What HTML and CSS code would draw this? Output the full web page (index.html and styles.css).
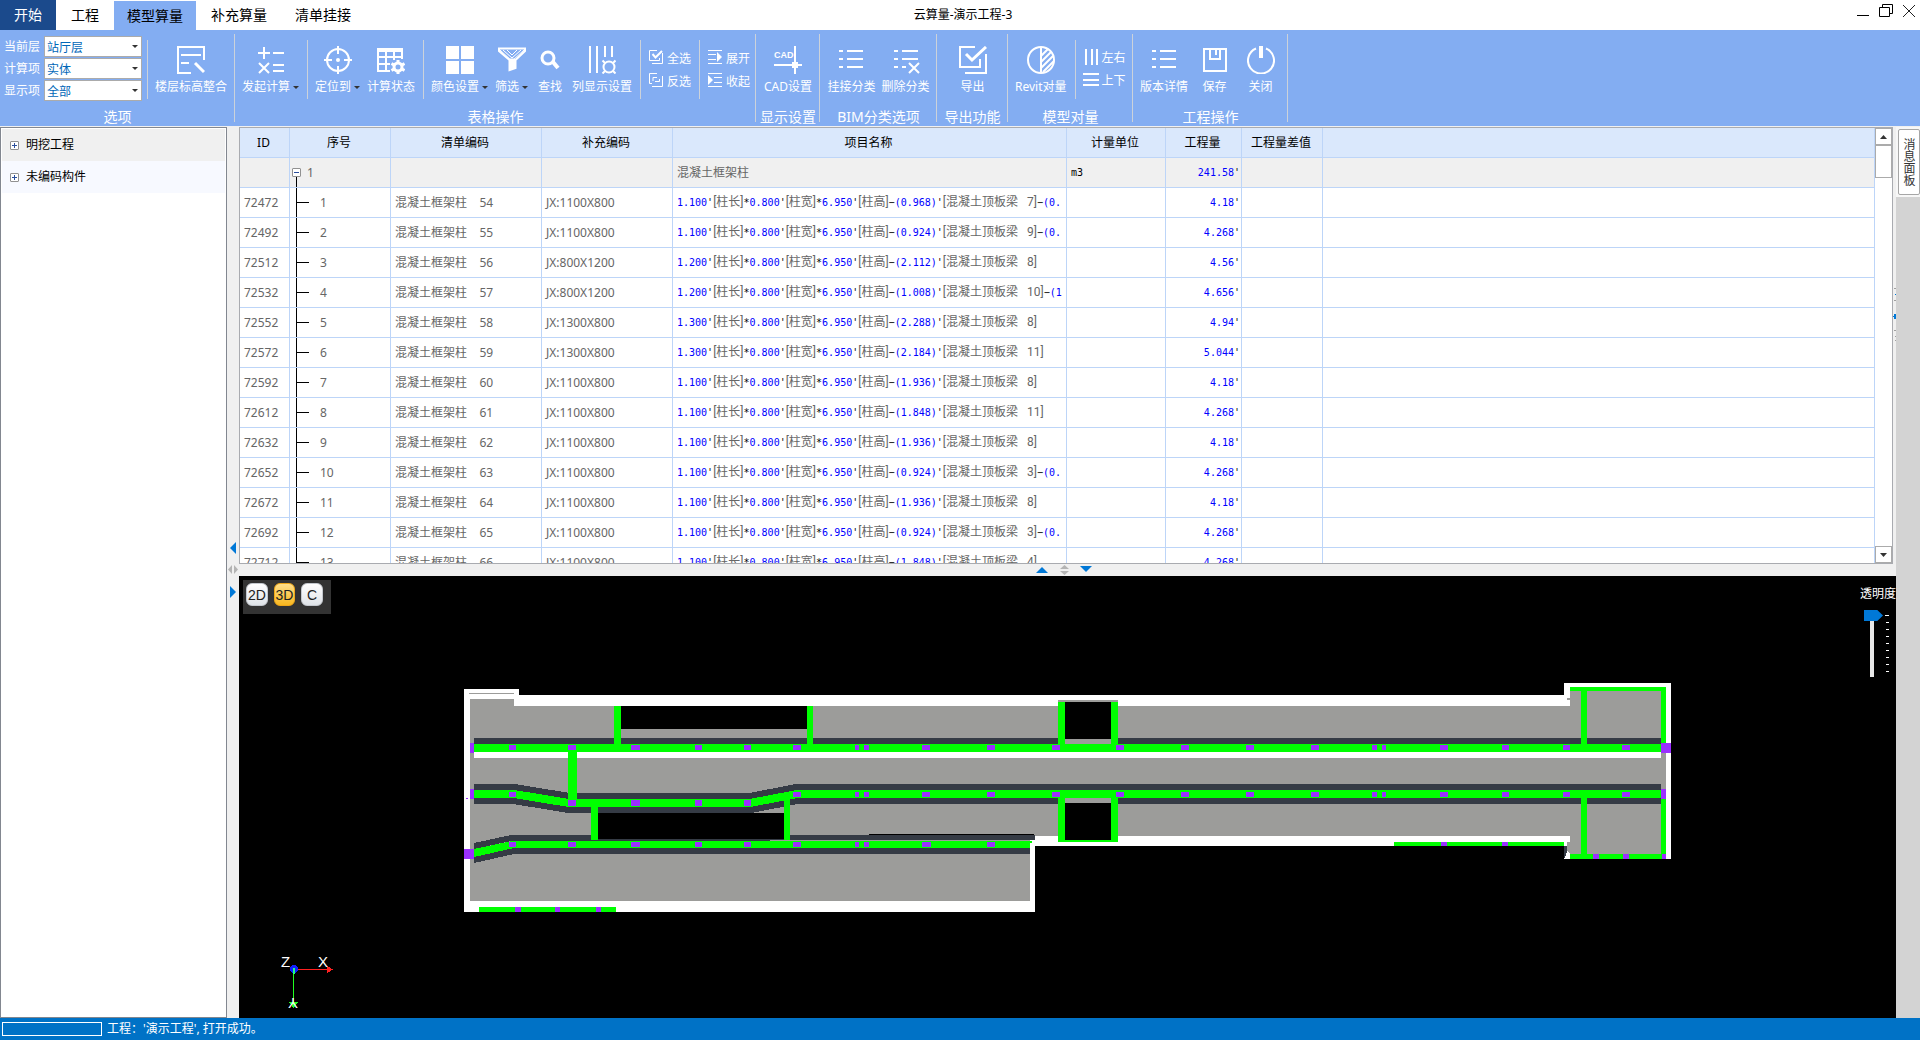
FILE: index.html
```html
<!DOCTYPE html>
<html lang="zh-CN">
<head>
<meta charset="utf-8">
<title>云算量-演示工程-3</title>
<link rel="stylesheet" href="styles.css">
</head>
<body>
<div class="app">
  <header class="titlebar">
    <nav class="tabs">
      <button class="tab tab-start">开始</button>
      <button class="tab">工程</button>
      <button class="tab tab-active">模型算量</button>
      <button class="tab">补充算量</button>
      <button class="tab">清单挂接</button>
    </nav>
    <h1 class="title">云算量-演示工程-3</h1>
    <div class="window-buttons">
      <button aria-label="最小化"><svg width="14" height="14"><path d="M1 11.500H13" stroke="#000"/></svg></button>
      <button aria-label="还原"><svg width="14" height="14" fill="none" stroke="#000"><path d="M.5 3.500H10.500V12.500H.5ZM3.500 3.500V.5H13.500V9.500H10.500"/></svg></button>
      <button aria-label="关闭窗口"><svg width="14" height="14"><path d="M1 1L13 13M13 1L1 13" stroke="#222"/></svg></button>
    </div>
  </header>

  <div class="ribbon">
    <section class="group group-options">
      <div class="tools">
        <div class="fields">
          <label for="floor">当前层</label><span class="combo"><select id="floor"><option>站厅层</option></select></span>
          <label for="calc">计算项</label><span class="combo"><select id="calc"><option>实体</option></select></span>
          <label for="show">显示项</label><span class="combo"><select id="show"><option>全部</option></select></span>
        </div>
        <i class="sep"></i>
        <button class="tool"><svg class="icon" viewBox="0 0 28 28" fill="none" stroke="#fff" stroke-width="2"><path d="M14 27H1V1H27V14M4 9H24M4 17H12"/><path d="M18 17L27 26" stroke-width="3"/></svg><span>楼层标高整合</span></button>
      </div>
      <h2>选项</h2>
    </section>

    <section class="group group-table">
      <div class="tools">
        <button class="tool"><svg class="icon" viewBox="0 0 28 28" fill="none" stroke="#fff" stroke-width="2"><path d="M1 7H13M7 1V13M16 7H27M16 19H27M16 25H27M2 17L12 27M12 17L2 27"/></svg><span class="drop">发起计算</span></button>
        <i class="sep"></i>
        <button class="tool"><svg class="icon" viewBox="0 0 28 28" fill="none" stroke="#fff" stroke-width="2"><circle cx="14" cy="14" r="11"/><path d="M14 0V8M14 20V28M0 14H8M20 14H28"/><circle cx="14" cy="14" r="2" fill="#fff" stroke="none"/></svg><span class="drop">定位到</span></button>
        <button class="tool"><svg class="icon" viewBox="0 0 28 28" fill="none" stroke="#fff" stroke-width="2"><path d="M0 4H26M1 2V25H13M1 11H26M1 18H13M9 4V25M17 6V14M25 3V13" /><path d="M0 4H26" stroke-width="4"/><circle cx="21" cy="21" r="4" stroke-width="3"/><path d="M21 14V17M21 25V28M14.500 17.500L17 19M25 23L27.500 24.500M14.500 24.500L17 23M25 19L27.500 17.500" stroke-width="3"/></svg><span>计算状态</span></button>
        <i class="sep"></i>
        <button class="tool"><svg class="icon" viewBox="0 0 28 28" fill="#fff"><path d="M0 0H13V13H0ZM15 0H28V13H15ZM0 15H13V28H0ZM15 15H28V28H15Z"/></svg><span class="drop">颜色设置</span></button>
        <button class="tool"><svg class="icon" viewBox="0 0 28 28" fill="none" stroke="#fff"><path d="M1 2.500H27V5L17.500 14V22L11.500 24V14L1 5Z" stroke-width="2"/><path d="M2 4L14 15L26 4M5 4L14 12L23 4M9 4L14 9L19 4M13 13V23M15 13V22"/><path d="M12 13H17V22L12 23Z" fill="#fff"/></svg><span class="drop">筛选</span></button>
        <button class="tool tool-min"><svg class="icon" viewBox="0 0 28 28" fill="none" stroke="#fff"><circle cx="12" cy="12" r="6" stroke-width="3"/><path d="M17 16L22 22" stroke-width="4"/></svg><span>查找</span></button>
        <button class="tool"><svg class="icon" viewBox="0 0 28 28" fill="none" stroke="#fff" stroke-width="2"><path d="M2 0V27M9 0V27M17 0V11M24 0V11"/><circle cx="21" cy="21" r="5.500"/><path d="M14.500 14.500L17 17M27.500 14.500L25 17M14.500 27.500L17 25M27.500 27.500L25 25"/></svg><span>列显示设置</span></button>
        <i class="sep"></i>
        <div class="stack">
          <button><svg width="14" height="14" fill="none" stroke="#fff"><path d="M8 .5H.5V10.500H10.500V8M13.500 3V13.500H3"/><path d="M3.500 4L6.500 7.500L13 1" stroke-width="2"/></svg><span>全选</span></button>
          <button><svg width="14" height="14" fill="none" stroke="#fff"><path d="M8 .5H.5V10.500H3M6 8.500H10.500V6M13.500 3V13.500H3M4 8V4.500H8"/></svg><span>反选</span></button>
        </div>
        <i class="sep"></i>
        <div class="stack">
          <button><svg width="14" height="14" stroke="#fff"><path d="M0 .5H14M0 4.500H8M0 9.500H8M0 13.500H14"/><path d="M9 2V12L14 7Z" fill="#fff" stroke="none"/></svg><span>展开</span></button>
          <button><svg width="14" height="14" stroke="#fff"><path d="M0 .5H14M6 4.500H14M6 9.500H14M0 13.500H14"/><path d="M0 2V12L5 7Z" fill="#fff" stroke="none"/></svg><span>收起</span></button>
        </div>
      </div>
      <h2>表格操作</h2>
    </section>

    <section class="group group-cad">
      <div class="tools tools-center">
        <button class="tool"><svg class="icon" viewBox="0 0 28 28"><path d="M21 0V28M0 19H28" stroke="#fff" stroke-width="2"/><path d="M18 16H24V22H18Z" fill="#fff"/><text x="0" y="12" class="cad-text">CAD</text></svg><span>CAD设置</span></button>
      </div>
      <h2>显示设置</h2>
    </section>

    <section class="group group-bim">
      <div class="tools tools-center">
        <button class="tool"><svg class="icon" viewBox="0 0 28 28" stroke="#fff" stroke-width="2"><path d="M2 5H6M10 5H26M2 13H6M10 13H26M2 21H6M10 21H26"/></svg><span>挂接分类</span></button>
        <button class="tool"><svg class="icon" viewBox="0 0 28 28" stroke="#fff" stroke-width="2"><path d="M2 5H6M10 5H26M2 13H6M10 13H26M2 21H6M10 21H14M17 17L27 27M27 17L17 27"/></svg><span>删除分类</span></button>
      </div>
      <h2>BIM分类选项</h2>
    </section>

    <section class="group group-export">
      <div class="tools tools-center">
        <button class="tool"><svg class="icon" viewBox="0 0 28 28" fill="none" stroke="#fff" stroke-width="2"><path d="M16 1H1V21H21V13M27 8V27H6"/><path d="M7 8L13 14L27 1" stroke-width="3"/></svg><span>导出</span></button>
      </div>
      <h2>导出功能</h2>
    </section>

    <section class="group group-model">
      <div class="tools">
        <button class="tool"><svg class="icon" viewBox="0 0 28 28" fill="none" stroke="#fff" stroke-width="2"><circle cx="14" cy="14" r="13"/><path d="M14 1V27M14 10L21 3M14 16L24 6M14 22L26 10M16 26L27 15"/></svg><span>Revit对量</span></button>
        <i class="sep"></i>
        <div class="stack">
          <button><svg width="16" height="16" stroke="#fff" stroke-width="2"><path d="M3 0V16M9 0V16M14 0V16"/></svg><span>左右</span></button>
          <button><svg width="16" height="16" stroke="#fff" stroke-width="2"><path d="M0 2H16M0 8H16M0 13H16"/></svg><span>上下</span></button>
        </div>
      </div>
      <h2>模型对量</h2>
    </section>

    <section class="group group-project">
      <div class="tools">
        <button class="tool"><svg class="icon" viewBox="0 0 28 28" stroke="#fff" stroke-width="2"><path d="M2 5H6M10 5H26M2 13H6M10 13H26M2 21H6M10 21H26"/></svg><span>版本详情</span></button>
        <button class="tool tool-wide"><svg class="icon" viewBox="0 0 28 28" fill="none" stroke="#fff" stroke-width="2"><path d="M3 3H25V25H3ZM9 3V13H19V3M15 3V9"/></svg><span>保存</span></button>
        <button class="tool tool-wide"><svg class="icon" viewBox="0 0 28 28" fill="none" stroke="#fff" stroke-width="2"><path d="M9 2.500A13 13 0 1 0 19 2.500"/><path d="M14 0V12" stroke-width="4"/></svg><span>关闭</span></button>
      </div>
      <h2>工程操作</h2>
    </section>
  </div>

  <main class="workspace">
    <aside class="tree">
      <button class="node node-first"><i class="expander"></i>明挖工程</button>
      <button class="node node-second"><i class="expander"></i>未编码构件</button>
    </aside>

    <div class="vsplit">
      <svg width="12" height="60"><path d="M9 2V14L3 8Z" fill="#0078d7"/><path d="M5 25V34L1 29.500ZM7 25V34L11 29.500Z" fill="#b4b4b4"/><path d="M3 46V58L9 52Z" fill="#0078d7"/></svg>
    </div>

    <div class="center">
      <div class="grid">
        <div class="grid-scroll">
          <table>
            <colgroup><col class="c-id"><col class="c-seq"><col class="c-list"><col class="c-extra"><col class="c-name"><col class="c-unit"><col class="c-qty"><col class="c-diff"><col></colgroup>
            <thead><tr><th>ID</th><th>序号</th><th>清单编码</th><th>补充编码</th><th>项目名称</th><th>计量单位</th><th>工程量</th><th>工程量差值</th><th></th></tr></thead>
            <tbody>
              <tr class="total"><td></td><td class="root"><i class="expander open"></i>1</td><td></td><td></td><td>混凝土框架柱</td><td class="unit">m3</td><td class="qty">241.58<b>'</b></td><td></td><td></td></tr>
              <tr><td>72472</td><td class="leaf">1</td><td>混凝土框架柱    54</td><td>JX:1100X800</td><td class="f">1.100<b>'</b><s>[柱长]</s><b>*</b>0.800<b>'</b><s>[柱宽]</s><b>*</b>6.950<b>'</b><s>[柱高]</s><b>−</b>(0.968)<b>'</b><s>[混凝土顶板梁   7]</s><b>−</b>(0.</td><td></td><td class="qty">4.18<b>'</b></td><td></td><td></td></tr>
              <tr><td>72492</td><td class="leaf">2</td><td>混凝土框架柱    55</td><td>JX:1100X800</td><td class="f">1.100<b>'</b><s>[柱长]</s><b>*</b>0.800<b>'</b><s>[柱宽]</s><b>*</b>6.950<b>'</b><s>[柱高]</s><b>−</b>(0.924)<b>'</b><s>[混凝土顶板梁   9]</s><b>−</b>(0.</td><td></td><td class="qty">4.268<b>'</b></td><td></td><td></td></tr>
              <tr><td>72512</td><td class="leaf">3</td><td>混凝土框架柱    56</td><td>JX:800X1200</td><td class="f">1.200<b>'</b><s>[柱长]</s><b>*</b>0.800<b>'</b><s>[柱宽]</s><b>*</b>6.950<b>'</b><s>[柱高]</s><b>−</b>(2.112)<b>'</b><s>[混凝土顶板梁   8]</s></td><td></td><td class="qty">4.56<b>'</b></td><td></td><td></td></tr>
              <tr><td>72532</td><td class="leaf">4</td><td>混凝土框架柱    57</td><td>JX:800X1200</td><td class="f">1.200<b>'</b><s>[柱长]</s><b>*</b>0.800<b>'</b><s>[柱宽]</s><b>*</b>6.950<b>'</b><s>[柱高]</s><b>−</b>(1.008)<b>'</b><s>[混凝土顶板梁   10]</s><b>−</b>(1</td><td></td><td class="qty">4.656<b>'</b></td><td></td><td></td></tr>
              <tr><td>72552</td><td class="leaf">5</td><td>混凝土框架柱    58</td><td>JX:1300X800</td><td class="f">1.300<b>'</b><s>[柱长]</s><b>*</b>0.800<b>'</b><s>[柱宽]</s><b>*</b>6.950<b>'</b><s>[柱高]</s><b>−</b>(2.288)<b>'</b><s>[混凝土顶板梁   8]</s></td><td></td><td class="qty">4.94<b>'</b></td><td></td><td></td></tr>
              <tr><td>72572</td><td class="leaf">6</td><td>混凝土框架柱    59</td><td>JX:1300X800</td><td class="f">1.300<b>'</b><s>[柱长]</s><b>*</b>0.800<b>'</b><s>[柱宽]</s><b>*</b>6.950<b>'</b><s>[柱高]</s><b>−</b>(2.184)<b>'</b><s>[混凝土顶板梁   11]</s></td><td></td><td class="qty">5.044<b>'</b></td><td></td><td></td></tr>
              <tr><td>72592</td><td class="leaf">7</td><td>混凝土框架柱    60</td><td>JX:1100X800</td><td class="f">1.100<b>'</b><s>[柱长]</s><b>*</b>0.800<b>'</b><s>[柱宽]</s><b>*</b>6.950<b>'</b><s>[柱高]</s><b>−</b>(1.936)<b>'</b><s>[混凝土顶板梁   8]</s></td><td></td><td class="qty">4.18<b>'</b></td><td></td><td></td></tr>
              <tr><td>72612</td><td class="leaf">8</td><td>混凝土框架柱    61</td><td>JX:1100X800</td><td class="f">1.100<b>'</b><s>[柱长]</s><b>*</b>0.800<b>'</b><s>[柱宽]</s><b>*</b>6.950<b>'</b><s>[柱高]</s><b>−</b>(1.848)<b>'</b><s>[混凝土顶板梁   11]</s></td><td></td><td class="qty">4.268<b>'</b></td><td></td><td></td></tr>
              <tr><td>72632</td><td class="leaf">9</td><td>混凝土框架柱    62</td><td>JX:1100X800</td><td class="f">1.100<b>'</b><s>[柱长]</s><b>*</b>0.800<b>'</b><s>[柱宽]</s><b>*</b>6.950<b>'</b><s>[柱高]</s><b>−</b>(1.936)<b>'</b><s>[混凝土顶板梁   8]</s></td><td></td><td class="qty">4.18<b>'</b></td><td></td><td></td></tr>
              <tr><td>72652</td><td class="leaf">10</td><td>混凝土框架柱    63</td><td>JX:1100X800</td><td class="f">1.100<b>'</b><s>[柱长]</s><b>*</b>0.800<b>'</b><s>[柱宽]</s><b>*</b>6.950<b>'</b><s>[柱高]</s><b>−</b>(0.924)<b>'</b><s>[混凝土顶板梁   3]</s><b>−</b>(0.</td><td></td><td class="qty">4.268<b>'</b></td><td></td><td></td></tr>
              <tr><td>72672</td><td class="leaf">11</td><td>混凝土框架柱    64</td><td>JX:1100X800</td><td class="f">1.100<b>'</b><s>[柱长]</s><b>*</b>0.800<b>'</b><s>[柱宽]</s><b>*</b>6.950<b>'</b><s>[柱高]</s><b>−</b>(1.936)<b>'</b><s>[混凝土顶板梁   8]</s></td><td></td><td class="qty">4.18<b>'</b></td><td></td><td></td></tr>
              <tr><td>72692</td><td class="leaf">12</td><td>混凝土框架柱    65</td><td>JX:1100X800</td><td class="f">1.100<b>'</b><s>[柱长]</s><b>*</b>0.800<b>'</b><s>[柱宽]</s><b>*</b>6.950<b>'</b><s>[柱高]</s><b>−</b>(0.924)<b>'</b><s>[混凝土顶板梁   3]</s><b>−</b>(0.</td><td></td><td class="qty">4.268<b>'</b></td><td></td><td></td></tr>
              <tr><td>72712</td><td class="leaf">13</td><td>混凝土框架柱    66</td><td>JX:1100X800</td><td class="f">1.100<b>'</b><s>[柱长]</s><b>*</b>0.800<b>'</b><s>[柱宽]</s><b>*</b>6.950<b>'</b><s>[柱高]</s><b>−</b>(1.848)<b>'</b><s>[混凝土顶板梁   4]</s></td><td></td><td class="qty">4.268<b>'</b></td><td></td><td></td></tr>
            </tbody>
          </table>
        </div>
        <div class="scrollbar">
          <button aria-label="向上"><svg width="7" height="4"><path d="M0 4L3.500 0L7 4Z" fill="#333"/></svg></button>
          <div class="thumb"></div>
          <button class="down" aria-label="向下"><svg width="7" height="4"><path d="M0 0L3.500 4L7 0Z" fill="#333"/></svg></button>
        </div>
      </div>

      <div class="hsplit">
        <svg width="60" height="12"><path d="M1 9H13L7 3Z" fill="#0078d7"/><path d="M25 5H34L29.500 1ZM25 7H34L29.500 11Z" fill="#b4b4b4"/><path d="M45 2H57L51 8Z" fill="#0078d7"/></svg>
      </div>

      <div class="viewport">
        <svg class="scene" viewBox="239 576 1657 442" preserveAspectRatio="xMinYMin meet" shape-rendering="crispEdges">
          <path class="white" d="M464 689H519V695H1564V683H1671V859H1564V846H1035V912H464Z"/>
          <path class="grey" d="M470 699H514V706H1570V687H1666V859H1570V836H1035V840H1030V901H470Z"/>
          <path class="grey" d="M469 693H514V694H469ZM1567 698H1570V700H1567ZM1058 700H1118V706H1058Z"/>
          <path class="dark" d="M474 738H1661V744H474Z"/>
          <path class="white" d="M474 752H1661V758H474Z"/>
          <path class="dark-line" stroke-width="20" d="M474 794H514L569 803H750L797 794H1661"/>
          <path class="dark" d="M474 843L511 835H1035V840H1034L511 841L474 849ZM474 857L514 848H1030V854H514L474 863Z"/>
          <path class="grey" d="M1065 739H1111V744H1065ZM1065 798H1111V804H1065Z"/>
          <path class="black" d="M621 706H807V729H621ZM598 813H784V839H598ZM869 834H1034V835H869ZM1065 702H1111V739H1065ZM1065 803H1111V840H1065Z"/>
          <path class="green-line" stroke-width="8" d="M474 794H514L569 803H750L797 794H1661"/>
          <path class="green" d="M474 744H1661V752H474ZM474 849L512 841H1032V843H1030V848H514L474 857ZM568 752H577V800H568ZM614 706H621V744H614ZM807 706H813V744H807ZM591 806H598V840H591ZM784 798H790V840H784ZM1058 702H1065V744H1058ZM1111 702H1118V744H1111ZM1058 798H1065V842H1058ZM1111 798H1118V842H1111ZM1058 840H1118V842H1058ZM479 907H616V912H479ZM1394 842H1564V846H1394ZM1570 687H1666V691H1570ZM1661 687H1666V743H1661ZM1661 799H1666V859H1661ZM1581 691H1587V744H1581ZM1581 798H1587V854H1581ZM1570 854H1666V859H1570Z"/>
          <path class="purple" d="M470 743H474V753H470ZM470 789H474V799H470ZM466 798H468V799H466ZM464 849H474V859H464ZM1661 743H1671V753H1661ZM1661 789H1666V799H1661ZM515 907H521V912H515ZM555 907H560V912H555ZM596 907H601V912H596ZM1441 842H1447V846H1441ZM1502 842H1508V846H1502ZM1593 854H1599V859H1593ZM1623 854H1629V859H1623ZM1662 854H1666V859H1662Z"/>
          <path class="purple-line" stroke-width="5" d="M509 747.500h7M568 747.500h8M631 747.500h9M695 747.500h7M744 747.500h7M793 747.500h8M855 747.500h4M864 747.500h5M922 747.500h8M987 747.500h8M1052 747.500h8M1116 747.500h8M1181 747.500h8M1246 747.500h8M1311 747.500h8M1372 747.500h5M1382 747.500h4M1440 747.500h8M1502 747.500h7M1563 747.500h7M1622 747.500h8"/>
          <path class="purple-line" stroke-width="5" d="M509 794.500h7M793 794.500h8M855 794.500h4M864 794.500h5M922 794.500h8M987 794.500h8M1052 794.500h8M1116 794.500h8M1181 794.500h8M1246 794.500h8M1311 794.500h8M1372 794.500h5M1382 794.500h4M1440 794.500h8M1502 794.500h7M1563 794.500h7M1622 794.500h8"/>
          <path class="purple-line" stroke-width="6" d="M568 803h8M631 803h9M695 803h7M744 803h7"/>
          <path class="purple-line" stroke-width="5" d="M509 844.500h7M568 844.500h8M631 844.500h9M695 844.500h7M744 844.500h7M793 844.500h8M855 844.500h4M864 844.500h5M922 844.500h9M987 844.500h8"/>
          <path class="dark" d="M1564 846H1567V852L1565 858H1564Z"/>
          <path class="grey" d="M1567 842H1570V854L1567 850Z"/>
          <path d="M294 969.500H328" stroke="#ff2020"/>
          <path d="M327 966L333 969.500L327 973Z" fill="#ff2020"/>
          <path d="M293.500 970V1004" stroke="#20ff20"/>
          <path d="M289 1002H298L293.500 1008Z" fill="#20ff20"/>
          <circle cx="294" cy="969" r="4" fill="#1020ff"/>
          <path d="M293 968H295V974H293Z" fill="#20ff80"/>
          <text class="axis" x="281" y="967">Z</text>
          <text class="axis" x="318" y="967">X</text>
          <text class="axis" x="-298" y="-998" transform="rotate(180)">Y</text>
        </svg>
        <div class="view-buttons">
          <button>2D</button><button class="on">3D</button><button>C</button>
        </div>
        <div class="opacity">
          <label for="opacity">透明度</label>
          <div class="opacity-control">
            <input id="opacity" type="range" min="0" max="8" value="0">
            <svg width="4" height="58" stroke="#fff" shape-rendering="crispEdges"><path d="M0 .5H4M1 7.500H4M1 14.500H4M1 21.500H4M1 28.500H4M1 35.500H4M1 42.500H4M1 49.500H4M1 56.500H4"/></svg>
          </div>
        </div>
      </div>
    </div>

    <div class="edge">
      <svg width="3" height="60" shape-rendering="crispEdges"><path d="M1 .5H3M1 12.500H3M1 42.500H3M2 48H3V52H2" stroke="#a0a0a0" fill="none"/><path d="M2 6H3V7H2ZM0 28H1V26H3V31H1V29H0Z" fill="#0078d7"/></svg>
    </div>

    <aside class="dock">
      <div class="dock-head"><button class="dock-tab">消息面板</button></div>
    </aside>
  </main>

  <footer class="status">
    <div class="progress"></div>
    <span>工程：'演示工程', 打开成功。</span>
  </footer>
</div>
</body>
</html>
```
FILE: styles.css
```css
* { box-sizing: border-box; }

body {
  margin: 0;
  font: 12px/16px "Noto Sans", "Noto Sans CJK SC", sans-serif;
  color: #000;
  background: #f0f0f0;
}

button {
  margin: 0;
  padding: 0;
  border: 0;
  background: none;
  font: inherit;
  color: inherit;
}

svg { display: block; flex: none; }

.app {
  display: flex;
  flex-direction: column;
  height: 100vh;
  overflow: hidden;
}

/* Title bar */
.titlebar {
  display: grid;
  grid-template-columns: 1fr auto 1fr;
  height: 30px;
  flex: none;
  overflow: hidden;
  background: #fff;
}

.tabs { display: flex; padding-right: 8px; }

.tab {
  padding: 0 14px;
  font-size: 14px;
  line-height: 20px;
  white-space: nowrap;
}

.tab-start { background: #1b4a8c; color: #fff; }

.tab-active {
  margin-top: 1px;
  padding: 0 13px;
  background: #83adf2;
}

.tab-start + .tab { padding: 0 15px; }
.tab-active + .tab { padding: 0 14px 0 15px; }

.title {
  margin: 0;
  padding-left: 6px;
  font-size: 12px;
  font-weight: 400;
  line-height: 30px;
}

.window-buttons {
  display: flex;
  justify-content: flex-end;
  align-items: flex-start;
  gap: 9px;
  padding: 4px 4px 0 0;
}

/* Ribbon */
.ribbon {
  display: flex;
  height: 96px;
  flex: none;
  background: #83adf2;
  color: #fff;
}

.group {
  position: relative;
  display: flex;
  flex-direction: column;
  justify-content: space-between;
}

.group::after {
  content: "";
  position: absolute;
  right: 0;
  top: 4px;
  bottom: 4px;
  width: 1px;
  background: #ccd2da;
}

.group-options { width: 235px; }
.group-table { width: 521px; }
.group-cad { width: 64px; }
.group-bim { width: 117px; }
.group-export { width: 71px; }
.group-model { width: 125px; }
.group-project { width: 155px; }

.group h2 {
  margin: 0;
  font-size: 14px;
  font-weight: 400;
  line-height: 18px;
  text-align: center;
  white-space: nowrap;
}

.tools {
  display: flex;
  gap: 7px;
  height: 69px;
  padding: 10px 0 0 7px;
}

.tools-center { justify-content: center; gap: 6px; padding-left: 0; }

.sep { width: 1px; margin-left: 1px; background: #ccd2da; }

.tool {
  display: flex;
  flex-direction: column;
  align-items: center;
  gap: 5px;
  padding-top: 6px;
  white-space: nowrap;
}

.tool-min { min-width: 30px; }
.tool-wide { min-width: 39px; }
.icon { width: 28px; height: 28px; }
.cad-text { font: bold 9px "Liberation Sans", sans-serif; fill: #fff; }

.drop { display: flex; align-items: center; gap: 3px; }

.drop::after {
  content: "";
  border: solid transparent;
  border-width: 3px 3px 0;
  border-top-color: #333;
}

.stack {
  display: flex;
  flex-direction: column;
  gap: 7px;
  padding: 10px 0 0 1px;
}

.stack button {
  display: flex;
  gap: 4px;
  height: 16px;
  white-space: nowrap;
}

.stack span { line-height: 17px; }
.group-model .stack { padding: 9px 0 0; }
.group-model .stack button { gap: 3px; }

.group-options .tools { gap: 5px; padding-left: 4px; }
.group-options .sep { margin: 0; }
.group-options .tool { margin-left: 2px; }

.fields {
  display: grid;
  grid-template-columns: 36px 98px;
  grid-auto-rows: 21px;
  column-gap: 4px;
  row-gap: 1px;
  margin-top: -4px;
  width: 138px;
  line-height: 22px;
  white-space: nowrap;
}

.combo { position: relative; }

.combo::after {
  content: "";
  position: absolute;
  right: 4px;
  top: 9px;
  border: solid transparent;
  border-width: 3px 3px 0;
  border-top-color: #333;
}

.combo select {
  display: block;
  width: 100%;
  height: 21px;
  padding: 0 2px;
  appearance: none;
  border: 1px solid #ababab;
  border-radius: 0;
  background: #fff;
  color: #0067b8;
  font: inherit;
}

/* Workspace */
.workspace {
  display: flex;
  flex: 1;
  min-height: 0;
  padding-top: 1px;
}

.tree {
  width: 227px;
  flex: none;
  padding: 1px;
  border: 1px solid #828790;
  background: #fff;
}

.node {
  display: flex;
  align-items: center;
  gap: 7px;
  width: 100%;
  height: 32px;
  padding-left: 8px;
}

.node-first { background: #f0f0f0; }
.node-second { background: #f7f9ff; }

.expander {
  position: relative;
  flex: none;
  width: 9px;
  height: 9px;
  border: 1px solid #919191;
  border-radius: 1px;
  background:
    linear-gradient(#2b4f9c, #2b4f9c) center / 5px 1px no-repeat,
    linear-gradient(#2b4f9c, #2b4f9c) center / 1px 5px no-repeat,
    #fff;
}

.expander.open {
  background: linear-gradient(#2b4f9c, #2b4f9c) center / 5px 1px no-repeat, #fff;
}

.vsplit {
  display: flex;
  align-items: center;
  width: 12px;
  flex: none;
  padding-bottom: 6px;
}

.center {
  display: grid;
  grid-template-rows: 437fr 12px 442fr;
  grid-template-columns: minmax(0, 1fr);
  flex: 1;
  min-width: 0;
}

/* Quantity table */
.grid {
  display: flex;
  min-height: 0;
  border: 1px solid #a9abb0;
  background: #fff;
}

.grid-scroll { flex: 1; min-width: 0; overflow: hidden; }

table {
  width: 100%;
  table-layout: fixed;
  border-collapse: separate;
  border-spacing: 0;
}

.c-id { width: 50px; }
.c-seq { width: 101px; }
.c-list { width: 151px; }
.c-extra { width: 131px; }
.c-name { width: 394px; }
.c-unit { width: 99px; }
.c-qty { width: 76px; }
.c-diff { width: 81px; }

th, td {
  height: 30px;
  padding: 0 4px;
  border: solid #bdd5f8;
  border-width: 0 1px 1px 0;
  line-height: 16px;
  text-align: left;
  white-space: pre;
  overflow: hidden;
}

th {
  padding: 0 4px 0 2px;
  background: #dae8fc;
  font-weight: 400;
  text-align: center;
}

td { color: #666; }
.total td { background: #f0f0f0; }

.root, .leaf { position: relative; }
td.root { padding-left: 17px; }
td.leaf { padding-left: 30px; }

.root .expander { position: absolute; left: 2px; top: 10px; }

.root::after {
  content: "";
  position: absolute;
  left: 6px;
  top: 19px;
  width: 1px;
  height: 11px;
  background: #000;
}

.leaf::before {
  content: "";
  position: absolute;
  left: 6px;
  top: 0;
  width: 1px;
  height: 30px;
  background: #000;
}

.leaf::after {
  content: "";
  position: absolute;
  left: 7px;
  top: 14px;
  width: 12px;
  height: 1px;
  background: #000;
}

td.f, td.qty, td.unit {
  font-family: "DejaVu Sans Mono", monospace;
  font-size: 10px;
  color: #00f;
}

td.qty { padding-right: 1px; text-align: right; }
td.unit { color: #000; }

td b { font-weight: 400; color: #000; }

td s {
  font: 12px/16px Roboto, "Noto Sans CJK SC", sans-serif;
  text-decoration: none;
  color: #666;
}

.scrollbar {
  display: flex;
  flex-direction: column;
  width: 17px;
  flex: none;
}

.scrollbar button {
  display: grid;
  place-items: center;
  height: 17px;
  border: 1px solid #ababab;
}

.scrollbar .down { margin-top: auto; }

.thumb { height: 33px; border: 1px solid #ababab; }

.hsplit { margin-right: -3px; padding-left: 796px; }

/* 3D view */
.viewport {
  position: relative;
  min-height: 0;
  margin-right: -3px;
  overflow: hidden;
  background: #000;
}

.scene { width: 100%; height: 100%; }
.white { fill: #fff; }
.grey { fill: #9c9c9a; }
.dark { fill: #353b45; }
.black { fill: #000; }
.green { fill: #0f0; }
.purple { fill: #9b30ff; }
.dark-line { fill: none; stroke: #353b45; }
.green-line { fill: none; stroke: #0f0; }
.purple-line { fill: none; stroke: #9b30ff; }
.axis { font: 15px "Liberation Sans", sans-serif; fill: #fff; }

.view-buttons {
  position: absolute;
  left: 4px;
  top: 4px;
  display: flex;
  gap: 6px;
  width: 88px;
  height: 34px;
  padding: 3px 8px 8px 3px;
  background: #333;
}

.view-buttons button {
  flex: 1 1 0;
  min-width: 0;
  border: 1px solid #c4c8ce;
  border-radius: 6px;
  background: linear-gradient(#fff, #dfe3e8);
  font: 14px "Liberation Sans", sans-serif;
  color: #222;
}

.view-buttons .on {
  border-color: #f0a818;
  background: linear-gradient(#ffdf8a, #f9b820);
}

.opacity {
  position: absolute;
  right: 0;
  top: 10px;
  width: 36px;
  color: #fff;
}

.opacity label { display: block; white-space: nowrap; }

.opacity-control {
  display: flex;
  gap: 2px;
  margin: 8px 0 0 4px;
}

.opacity-control svg { margin-top: 5px; }

.opacity-control input {
  appearance: none;
  writing-mode: vertical-lr;
  width: 19px;
  height: 67px;
  margin: 0;
  background: linear-gradient(#e8e8e8, #e8e8e8) 6px 0 / 4px 100% no-repeat;
}

.opacity-control input::-webkit-slider-thumb {
  appearance: none;
  width: 19px;
  height: 11px;
  background: #0078d7;
  clip-path: polygon(0 0, 70% 0, 100% 50%, 70% 100%, 0 100%);
}

/* Right edge */
.edge { width: 3px; flex: none; padding-top: 161px; }

.dock { width: 24px; flex: none; background: #d3d3d3; }

.dock-head { height: 70px; padding: 2px 0 0 2px; background: #f7f7f7; }

.dock-tab {
  width: 22px;
  height: 66px;
  padding-right: 2px;
  border: 1px solid #a6a6a6;
  border-radius: 2px;
  background: #fff;
  color: #333;
  line-height: 18px;
  writing-mode: vertical-rl;
  white-space: nowrap;
}

/* Status bar */
.status {
  display: flex;
  align-items: center;
  gap: 5px;
  height: 22px;
  flex: none;
  padding-left: 2px;
  background: #0072c6;
  color: #fff;
}

.progress { width: 100px; height: 14px; border: 1px solid #fff; }
```
